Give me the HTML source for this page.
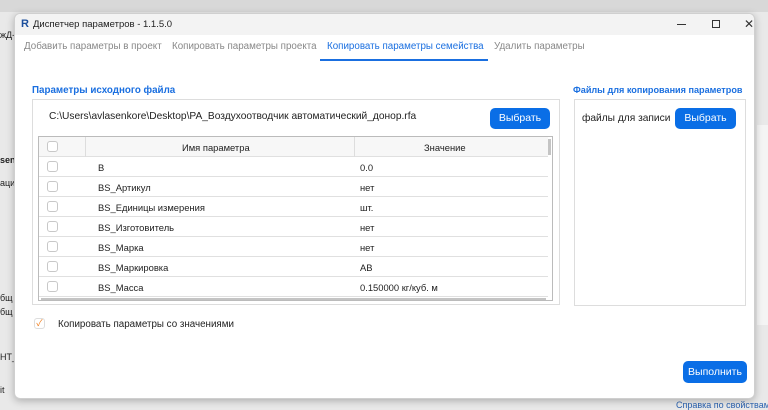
<!DOCTYPE html>
<html><head><meta charset="utf-8"><style>
*{box-sizing:border-box;margin:0;padding:0}
body{width:768px;height:408px;overflow:hidden;background:#e9e9e9;font-family:"Liberation Sans","Noto Sans CJK SC",sans-serif;position:relative;font-size:11px;color:#222}
.abs{position:absolute;white-space:nowrap}
.dlg{left:14px;top:13px;width:741px;height:386px;background:#fff;border:1px solid #cfcfcf;border-radius:6px;box-shadow:0 2px 8px rgba(0,0,0,.25)}
.title{left:0;top:0;width:739px;height:21px;background:#f3f3f3;border-radius:6px 6px 0 0}
.tab{top:27px;font-size:9.8px;color:#888}
.btn{background:#0a6ee6;color:#fff;border-radius:5px;font-size:10.5px;text-align:center}
.cb{width:11px;height:11px;border:1px solid #c8c8c8;border-radius:3px;background:#fff}
.row{left:0;width:509px;height:20px;border-bottom:1px solid #e0e0e0}
.row span{position:absolute;top:5px;font-size:9.4px}
</style></head><body>
<div class="abs" style="left:0;top:0;width:768px;height:12px;background:#d8d8d8"></div>
<div class="abs" style="left:0;top:30px;font-size:9px">жД-</div>
<div class="abs" style="left:0;top:155px;font-size:9px;font-weight:bold">sen</div>
<div class="abs" style="left:0;top:178px;font-size:9px">аци</div>
<div class="abs" style="left:0;top:293px;font-size:9px">бщ</div>
<div class="abs" style="left:0;top:307px;font-size:9px">бщ</div>
<div class="abs" style="left:0;top:352px;font-size:9px">НТ_</div>
<div class="abs" style="left:0;top:385px;font-size:9px">it</div>
<div class="abs" style="left:676px;top:400px;font-size:9px;color:#2a62b0">Справка по свойствам</div>
<div class="abs" style="left:757px;top:125px;width:11px;height:200px;background:#f4f4f4"></div>
<div class="abs dlg">
 <div class="abs title">
  <div class="abs" style="left:6px;top:4px;font-weight:bold;color:#1c4f9c;font-size:11px">R</div>
  <div class="abs" style="left:18px;top:5px;font-size:9.5px;color:#222">Диспетчер параметров - 1.1.5.0</div>
  <div class="abs" style="left:662px;top:10px;width:9px;height:1px;background:#333"></div>
  <div class="abs" style="left:697px;top:6px;width:8px;height:8px;border:1px solid #333"></div>
  <div class="abs" style="left:729px;top:3px;font-size:12px;color:#333">✕</div>
 </div>
 <div class="abs tab" style="left:9px">Добавить параметры в проект</div>
 <div class="abs tab" style="left:157px">Копировать параметры проекта</div>
 <div class="abs tab" style="left:312px;color:#1a6fe0">Копировать параметры семейства</div>
 <div class="abs tab" style="left:479px">Удалить параметры</div>
 <div class="abs" style="left:305px;top:45px;width:168px;height:2px;background:#1a6fe0"></div>
 <div class="abs" style="left:17px;top:71px;font-size:9.8px;font-weight:bold;color:#1a6fe0">Параметры исходного файла</div>
 <div class="abs" style="left:558px;top:71px;font-size:9.1px;font-weight:bold;color:#1a6fe0">Файлы для копирования параметров</div>
 <div class="abs" style="left:17px;top:85px;width:528px;height:206px;border:1px solid #ddd"></div>
 <div class="abs" style="left:559px;top:85px;width:172px;height:207px;border:1px solid #ddd"></div>
 <div class="abs" style="left:34px;top:97px;font-size:10.2px">C:\Users\avlasenkore\Desktop\PA_Воздухоотводчик автоматический_донор.rfa</div>
 <div class="abs btn" style="left:475px;top:94px;width:60px;height:21px;line-height:21px">Выбрать</div>
 <div class="abs" style="left:567px;top:99px;font-size:10.2px">файлы для записи</div>
 <div class="abs btn" style="left:660px;top:94px;width:61px;height:21px;line-height:21px">Выбрать</div>
 <div class="abs" style="left:23px;top:122px;width:515px;height:165px;border:1px solid #bbb;overflow:hidden">
  <div class="abs row" style="top:0;background:#f7f7f7"><span style="left:143px">Имя параметра</span><span style="left:385px">Значение</span><div class="abs cb" style="left:8px;top:4px"></div>
   <div class="abs" style="left:46px;top:0;width:1px;height:20px;background:#ddd"></div><div class="abs" style="left:315px;top:0;width:1px;height:20px;background:#ddd"></div></div>
  <div class="abs row" style="top:20px"><div class="abs cb" style="left:8px;top:4px"></div><span style="left:59px">B</span><span style="left:321px">0.0</span></div>
  <div class="abs row" style="top:40px"><div class="abs cb" style="left:8px;top:4px"></div><span style="left:59px">BS_Артикул</span><span style="left:321px">нет</span></div>
  <div class="abs row" style="top:60px"><div class="abs cb" style="left:8px;top:4px"></div><span style="left:59px">BS_Единицы измерения</span><span style="left:321px">шт.</span></div>
  <div class="abs row" style="top:80px"><div class="abs cb" style="left:8px;top:4px"></div><span style="left:59px">BS_Изготовитель</span><span style="left:321px">нет</span></div>
  <div class="abs row" style="top:100px"><div class="abs cb" style="left:8px;top:4px"></div><span style="left:59px">BS_Марка</span><span style="left:321px">нет</span></div>
  <div class="abs row" style="top:120px"><div class="abs cb" style="left:8px;top:4px"></div><span style="left:59px">BS_Маркировка</span><span style="left:321px">AB</span></div>
  <div class="abs row" style="top:140px"><div class="abs cb" style="left:8px;top:4px"></div><span style="left:59px">BS_Масса</span><span style="left:321px">0.150000 кг/куб. м</span></div>
  <div class="abs" style="left:2px;top:161px;width:505px;height:3px;background:#c4c4c4"></div>
  <div class="abs" style="left:509px;top:2px;width:3px;height:16px;background:#c4c4c4"></div>
 </div>
 <div class="abs cb" style="left:19px;top:304px;border-color:#ddd;color:#f08020;font-size:9px;line-height:9px;text-align:center">✓</div>
 <div class="abs" style="left:43px;top:305px;font-size:9.8px">Копировать параметры со значениями</div>
 <div class="abs btn" style="left:668px;top:347px;width:64px;height:22px;line-height:22px">Выполнить</div>
</div>
</body></html>
